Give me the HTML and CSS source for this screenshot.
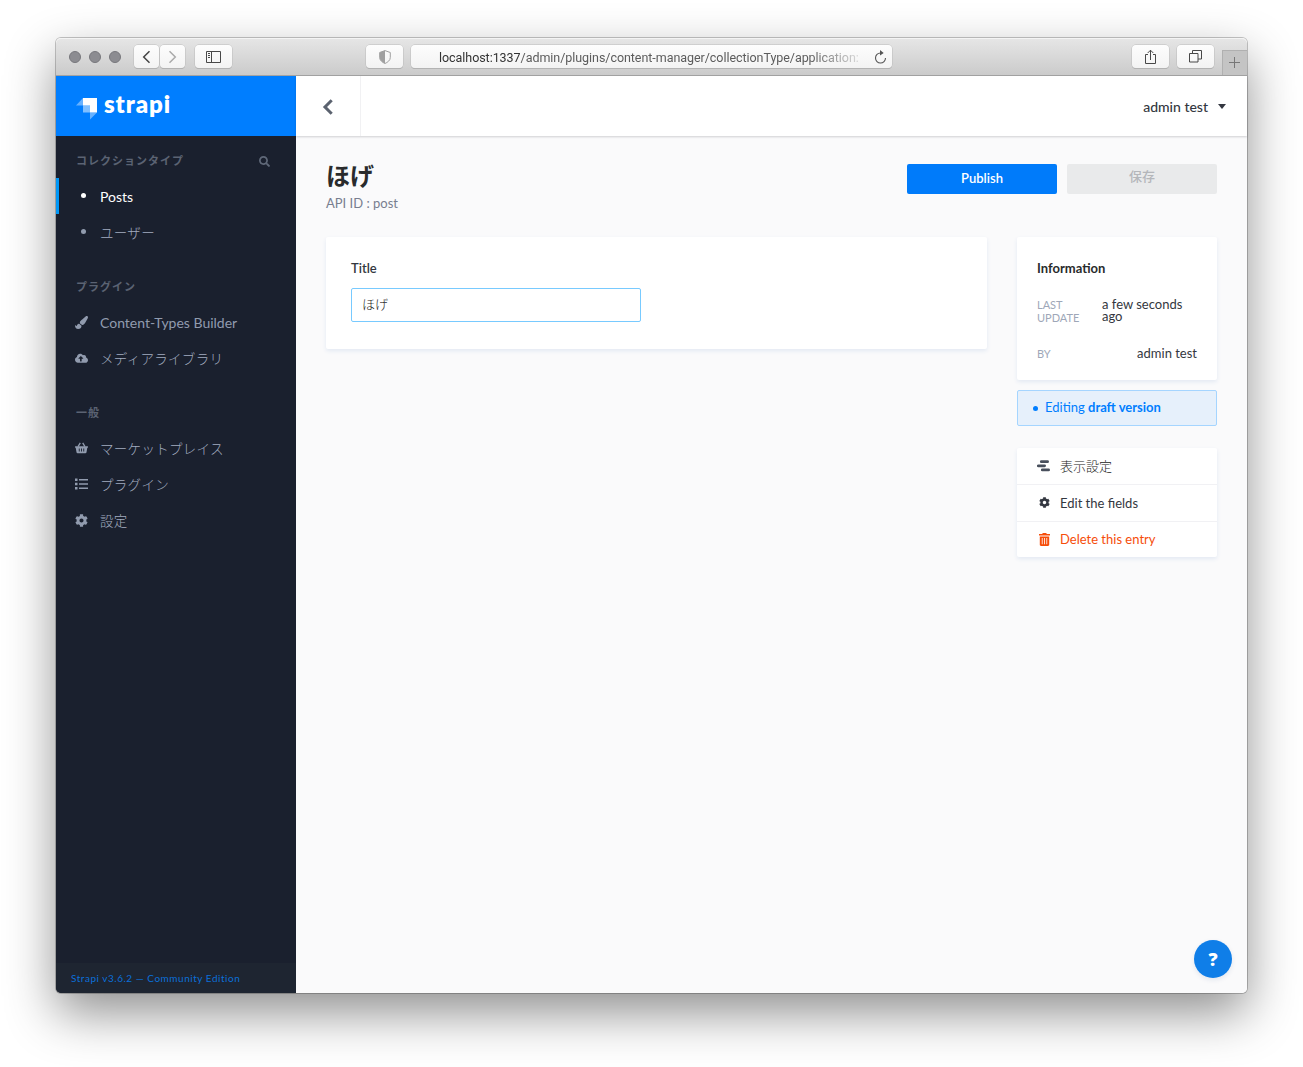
FILE: index.html
```html
<!DOCTYPE html>
<html lang="ja">
<head>
    <meta charset="UTF-8">
    <title>Strapi</title>
    <link rel="stylesheet" href="styles.css">
</head>
<body>
    <div class="window">
        <!-- Browser toolbar -->
        <div class="toolbar">
            <div class="lights"><i></i><i></i><i></i></div>
            <div class="nav-buttons">
                <span class="tool back"><svg width="9" height="14" viewBox="0 0 9 14"><path d="M7.5 1.2 1.7 7l5.8 5.8" fill="none" stroke="#444" stroke-width="1.5"/></svg></span>
                <span class="tool next"><svg width="9" height="14" viewBox="0 0 9 14"><path d="M1.5 1.2 7.3 7l-5.8 5.8" fill="none" stroke="#aaa" stroke-width="1.5"/></svg></span>
            </div>
            <span class="tool wide"><svg width="15" height="12" viewBox="0 0 15 12"><path d="M.5.5h14v11H.5zM5.5.5v11M2 2.5h2M2 4.5h2M2 6.5h2" fill="none" stroke="#484848"/></svg></span>
            <span class="tool wide shield"><svg width="12" height="14" viewBox="0 0 12 14"><path d="M6 .6 11.3 2.5v5.100c0 2.800-2.800 4.800-5.300 5.900C3.500 12.400.7 10.400.7 7.600V2.500z" fill="none" stroke="#a0a0a0"/><path d="M6 .6v12.900C3.500 12.400.7 10.400.7 7.600V2.500z" fill="#a0a0a0"/></svg></span>
            <div class="address">
                <span class="url"><b>localhost:1337</b>/admin/plugins/content-manager/collectionType/application:</span>
                <svg class="reload" width="13" height="14" viewBox="0 0 13 14"><path d="M8.300 3H6.500a5 5 0 1 0 5 5" fill="none" stroke="#555" stroke-width="1.100"/><path d="M6 0 9.700 3 6 5.600z" fill="#555"/></svg>
            </div>
            <span class="tool wide share"><svg width="13" height="16" viewBox="0 0 13 16"><path d="M4 5.500H1.500v9h10v-9H9M6.500 11V1.200M3.700 4l2.800-2.800L9.300 4" fill="none" stroke="#484848"/></svg></span>
            <span class="tool wide tabs"><svg width="13" height="13" viewBox="0 0 13 13"><path d="M.5 3.500h8.500v8.500H.5zM3.500 3.500V.5h9v8.500H9" fill="none" stroke="#484848"/></svg></span>
            <span class="new-tab"><svg width="11" height="11" viewBox="0 0 11 11"><path d="M5.500 0v11M0 5.500h11" stroke="#777"/></svg></span>
        </div>

        <div class="app">
            <div class="sidebar">
                <div class="brand">
                    <svg width="22" height="22" viewBox="0 0 22 22"><path d="M7 0h14v14.500h-7V7.500H7z" fill="#fff"/><path d="M7 0v7.500H0z" fill="#fff" opacity=".4"/><path d="M7 7.500h7v7H7z" fill="#fff" opacity=".5"/><path d="M14 14.500h7l-7 7z" fill="#fff" opacity=".4"/></svg>
                    <span class="wordmark">strapi</span>
                </div>

                <div class="menu">
                    <div class="section">
                        <div class="heading">コレクションタイプ
                            <svg class="search" width="11" height="11" viewBox="0 0 512 512"><path d="M505 442.700L405.300 343c-4.500-4.500-10.600-7-17-7H372c27.600-35.300 44-79.700 44-128C416 93.100 322.900 0 208 0S0 93.100 0 208s93.100 208 208 208c48.300 0 92.700-16.400 128-44v16.300c0 6.400 2.500 12.500 7 17l99.700 99.700c9.400 9.400 24.600 9.400 33.900 0l28.300-28.300c9.400-9.400 9.400-24.600.1-34zM208 336c-70.700 0-128-57.200-128-128 0-70.700 57.200-128 128-128 70.700 0 128 57.200 128 128 0 70.700-57.200 128-128 128z"/></svg>
                        </div>
                        <div class="link active"><span class="icon"><i class="dot"></i></span><span>Posts</span></div>
                        <div class="link"><span class="icon"><i class="dot"></i></span><span class="ja">ユーザー</span></div>
                    </div>
                    <div class="section">
                        <div class="heading">プラグイン</div>
                        <div class="link"><span class="icon"><svg width="13" height="13" viewBox="0 0 512 512"><path d="M167.020 309.340c-40.120 2.580-76.530 17.860-97.190 72.300-2.350 6.210-8 9.980-14.590 9.980-11.110 0-45.460-27.670-55.250-34.350C0 439.620 37.930 512 128 512c75.860 0 128-43.770 128-120.190 0-3.110-.65-6.080-.97-9.130l-88.010-73.340zM457.890 0c-15.160 0-29.370 6.710-40.210 16.450C213.270 199.050 192 203.340 192 257.090c0 13.700 3.250 26.760 8.730 38.700l63.820 53.180c7.210 1.800 14.640 3.030 22.390 3.030 62.110 0 98.110-45.470 211.160-256.460 7.380-14.350 13.900-29.850 13.900-45.990C512 20.640 486 0 457.890 0z"/></svg></span><span>Content-Types Builder</span></div>
                        <div class="link"><span class="icon"><svg width="13" height="10.400" viewBox="0 0 640 512"><path d="M537.600 226.600c4.100-10.700 6.400-22.400 6.400-34.600 0-53-43-96-96-96-19.700 0-38.100 6-53.300 16.200C367 64.200 315.300 32 256 32c-88.400 0-160 71.600-160 160 0 2.700.1 5.400.2 8.100C40.200 219.800 0 273.200 0 336c0 79.500 64.500 144 144 144h368c70.700 0 128-57.300 128-128 0-61.900-44-113.600-102.400-125.400zM393.400 288H328v112c0 8.800-7.200 16-16 16h-48c-8.800 0-16-7.200-16-16V288h-65.400c-14.300 0-21.400-17.200-11.300-27.300l105.400-105.400c6.200-6.200 16.400-6.200 22.600 0l105.400 105.400c10.100 10.100 2.900 27.300-11.300 27.300z"/></svg></span><span class="ja">メディアライブラリ</span></div>
                    </div>
                    <div class="section">
                        <div class="heading">一般</div>
                        <div class="link"><span class="icon"><svg width="13" height="12" viewBox="0 0 13 12"><path fill-rule="evenodd" d="M.1 4.200h12.800v1.500h-.6l-.8 4.600c-.1.600-.5.900-1.100.9H2.600c-.6 0-1-.3-1.100-.9L.7 5.700H.1zM3.800 6.500v3h.9v-3zM6.050 6.500v3h.9v-3zM8.300 6.500v3h.9v-3z"/><path d="M3 4.600 5.300.9M10 4.600 7.700.9" stroke="#919bae" stroke-width="1.300"/></svg></span><span class="ja">マーケットプレイス</span></div>
                        <div class="link"><span class="icon"><svg width="13" height="12" viewBox="0 0 13 12"><path d="M0 .5h2.500V3H0zM0 4.700h2.500v2.500H0zM0 9h2.500v2.500H0zM4 1h9v1.500H4zM4 5.200h9v1.500H4zM4 9.500h9V11H4z"/></svg></span><span class="ja">プラグイン</span></div>
                        <div class="link"><span class="icon"><svg width="13" height="13" viewBox="0 0 512 512"><path id="cog" d="M487.400 315.700l-42.600-24.600c4.300-23.200 4.300-47 0-70.200l42.600-24.600c4.900-2.800 7.100-8.600 5.500-14-11.100-35.600-30-67.800-54.700-94.600-3.800-4.100-10-5.100-14.800-2.300L380.800 110c-17.900-15.400-38.500-27.300-60.800-35.100V25.800c0-5.600-3.900-10.500-9.400-11.700-36.700-8.200-74.300-7.800-109.200 0-5.500 1.200-9.400 6.100-9.400 11.700V75c-22.200 7.900-42.800 19.800-60.800 35.100L88.700 85.500c-4.900-2.800-11-1.900-14.800 2.300-24.700 26.700-43.600 58.900-54.700 94.600-1.700 5.400.6 11.200 5.500 14L67.300 221c-4.300 23.200-4.300 47 0 70.200l-42.600 24.600c-4.900 2.800-7.100 8.600-5.500 14 11.100 35.600 30 67.800 54.700 94.600 3.800 4.100 10 5.100 14.800 2.300l42.600-24.600c17.900 15.400 38.500 27.300 60.800 35.100v49.200c0 5.600 3.900 10.500 9.400 11.700 36.700 8.200 74.300 7.800 109.200 0 5.500-1.200 9.400-6.100 9.400-11.700v-49.200c22.200-7.900 42.800-19.800 60.800-35.100l42.600 24.600c4.900 2.800 11 1.900 14.800-2.300 24.700-26.700 43.600-58.900 54.700-94.600 1.500-5.500-.7-11.300-5.600-14.100zM256 336c-44.100 0-80-35.900-80-80s35.900-80 80-80 80 35.900 80 80-35.900 80-80 80z"/></svg></span><span class="ja">設定</span></div>
                    </div>
                </div>

                <div class="version">Strapi v3.6.2 — Community Edition</div>
            </div>

            <div class="main">
                <div class="header">
                    <div class="go-back"><svg width="12" height="16" viewBox="0 0 12 16"><path d="M9.700 1.300 3 8l6.700 6.700" fill="none" stroke="#5b626f" stroke-width="3"/></svg></div>
                    <div class="user">admin test<i class="caret"></i></div>
                </div>

                <div class="content">
                    <div class="title-row">
                        <div>
                            <h1>ほげ</h1>
                            <p class="api-id">API ID : post</p>
                        </div>
                        <div class="actions">
                            <button class="publish">Publish</button>
                            <button class="save" disabled>保存</button>
                        </div>
                    </div>

                    <div class="columns">
                        <div class="card form">
                            <label for="title">Title</label>
                            <input type="text" id="title" value="ほげ">
                        </div>

                        <div class="aside">
                            <div class="card info">
                                <h2>Information</h2>
                                <div class="row updated"><span class="key">LAST UPDATE</span><span class="value">a few seconds ago</span></div>
                                <div class="row"><span class="key">BY</span><span class="value">admin test</span></div>
                            </div>
                            <div class="draft"><i></i><span>Editing <b>draft version</b></span></div>
                            <div class="card links">
                                <div class="item display"><span class="item-icon"><svg width="13" height="12" viewBox="0 0 13 12"><path d="M4.300 1.700h6.300M1.300 5.800h6.300M5.300 9.900h6.300" stroke="#484f5c" stroke-width="2.800" stroke-linecap="round"/></svg></span>表示設定</div>
                                <div class="item"><span class="item-icon gear"><svg width="11" height="11" viewBox="0 0 512 512"><use href="#cog" fill="#333740"/></svg></span>Edit the fields</div>
                                <div class="item delete"><span class="item-icon trash"><svg width="11" height="13" viewBox="0 0 11 13"><path fill="#f64d0a" fill-rule="evenodd" d="M0 1h3.200L3.800 0h3.400l.6 1H11v1.600H0zM.8 3.400h9.400v8.400c0 .7-.5 1.200-1.200 1.200H2c-.7 0-1.200-.5-1.200-1.200zM2.800 5v6.300h.8V5zM5.100 5v6.300h.8V5zM7.400 5v6.300h.8V5z"/></svg></span>Delete this entry</div>
                            </div>
                        </div>
                    </div>
                </div>

                <div class="help">?</div>
            </div>
        </div>
    </div>
</body>
</html>
```

FILE: styles.css
```css
* {
    box-sizing: border-box;
}

body {
    margin: 0;
    min-height: 1067px;
    padding: 38px 56px 0;
    background: #fff;
    font-family: Lato, "Noto Sans CJK JP", sans-serif;
    font-size: 13px;
    color: #333740;
}

.window {
    width: 1191px;
    height: 955px;
    display: flex;
    flex-direction: column;
    border-radius: 5px;
    box-shadow: 0 0 0 1px rgba(0,0,0,0.22), 0 20px 50px rgba(0,0,0,0.44);
}

.toolbar {
    height: 38px;
    flex: none;
    display: flex;
    align-items: center;
    background: linear-gradient(#e6e6e6, #cbcbcb);
    border-bottom: 1px solid #a3a3a3;
    border-radius: 5px 5px 0 0;
    box-shadow: inset 0 1px #f4f4f4;
}

.lights {
    display: flex;
    gap: 8px;
    margin: 0 13px 0 13px;
}

.lights i {
    width: 12px;
    height: 12px;
    border-radius: 50%;
    background: #8c8c91;
    border: 1px solid #77777c;
}

.nav-buttons {
    display: flex;
    gap: 1px;
    margin-right: 9px;
}

.tool {
    height: 23px;
    width: 26px;
    display: flex;
    align-items: center;
    justify-content: center;
    background: linear-gradient(#fdfdfd, #f3f3f3);
    border-radius: 4px;
    box-shadow: 0 0 0 0.5px #bbb, 0 1px 0.5px #aaa;
}

.wide {
    width: 37px;
}

.back, .next {
    width: 25px;
}

.nav-buttons + .wide {
    margin-left: 1px;
}

.shield {
    margin-left: 134px;
}

.address {
    width: 481px;
    height: 23px;
    margin-left: 8px;
    padding: 0 5px 0 28px;
    display: flex;
    align-items: center;
    justify-content: space-between;
    background: linear-gradient(#fdfdfd, #f3f3f3);
    border-radius: 4px;
    box-shadow: 0 0 0 0.5px #bbb, 0 1px 0.5px #aaa;
}

.url {
    padding-top: 2px;
    white-space: nowrap;
    font: 12.5px/20px Roboto, sans-serif;
    letter-spacing: -0.05px;
    color: #5c5c5c;
    -webkit-mask-image: linear-gradient(90deg, #000 370px, rgba(0,0,0,0.15) 422px);
    mask-image: linear-gradient(90deg, #000 370px, rgba(0,0,0,0.15) 422px);
}

.url b {
    font-weight: 400;
    color: #333;
}

.share {
    margin-left: auto;
}

.tabs {
    margin: 0 8px;
}

.new-tab {
    width: 25px;
    height: 25px;
    padding: 0 1px 1px 0;
    align-self: flex-end;
    display: flex;
    align-items: center;
    justify-content: center;
    border: 1px solid #b0b0b0;
    border-width: 1px 0 0 1px;
    background: #c4c4c4;
}

.app {
    flex: 1;
    display: flex;
}

.sidebar {
    width: 240px;
    flex: none;
    display: flex;
    flex-direction: column;
    background: #1a202e;
    border-radius: 0 0 0 5px;
    overflow: hidden;
}

.brand {
    height: 60px;
    display: flex;
    align-items: center;
    gap: 6px;
    padding: 5px 0 0 20px;
    background: #007eff;
}

.wordmark {
    color: #fff;
    font-size: 24px;
    font-weight: 800;
    line-height: 24px;
    letter-spacing: 0.9px;
    margin-top: -9px;
}

.menu {
    flex: 1;
    display: flex;
    flex-direction: column;
    gap: 18px;
    padding-top: 6px;
}

.heading {
    height: 36px;
    display: flex;
    align-items: center;
    justify-content: space-between;
    padding: 0 26px 0 20px;
    font-size: 11px;
    font-weight: 700;
    letter-spacing: 1px;
    color: #5b6373;
}

.search {
    margin-top: 2px;
    fill: #5f6878;
}

.link {
    height: 36px;
    display: flex;
    align-items: center;
    padding-left: 16px;
    border-left: 3px solid transparent;
    font-size: 14px;
    color: #919bae;
    fill: #919bae;
}

.link.active {
    color: #fff;
    border-left-color: #0097f7;
}

.ja {
    padding-bottom: 1px;
    font-size: 13.5px;
    font-weight: 300;
    letter-spacing: 0.3px;
    color: #a3adc0;
}

.icon {
    width: 25px;
    display: flex;
}

.dot {
    width: 5px;
    height: 5px;
    margin: -1px 0 0 6px;
    border-radius: 50%;
    background: currentColor;
}

.version {
    height: 30px;
    padding-left: 15px;
    font-size: 10px;
    line-height: 31px;
    letter-spacing: 0.52px;
    color: #0b6fd9;
    background: #1e2531;
}

.main {
    flex: 1;
    position: relative;
    background: #fafafb;
    border-radius: 0 0 5px 0;
}

.header {
    height: 60px;
    display: flex;
    align-items: center;
    justify-content: space-between;
    background: #fff;
    box-shadow: 0 1px 2px rgba(40,42,49,0.2);
}

.go-back {
    width: 65px;
    height: 60px;
    display: flex;
    align-items: center;
    justify-content: center;
    padding-top: 2px;
    border-right: 1px solid #f1f1f3;
}

.user {
    display: flex;
    align-items: center;
    gap: 10px;
    padding: 1px 21px 0 0;
    font-weight: 500;
    font-size: 14px;
}

.caret {
    border: 4.5px solid transparent;
    border-top: 5px solid #333740;
    border-bottom: 0;
}

.content {
    padding: 28px 30px 0;
}

.title-row {
    height: 73px;
    display: flex;
    justify-content: space-between;
}

h1 {
    margin: 0;
    font-size: 24px;
    line-height: 24px;
    font-weight: 700;
    color: #292b2c;
}

.api-id {
    margin: 6px 0 0;
    line-height: 18px;
    color: #787e8f;
}

.actions {
    display: flex;
    gap: 10px;
}

button {
    width: 150px;
    height: 30px;
    padding: 0 0 2px;
    border: none;
    border-radius: 2px;
    font-family: inherit;
    font-size: 13px;
    font-weight: 600;
}

.publish {
    background: #007bfa;
    color: #fff;
}

.save {
    background: #e9eaeb;
    color: #b4b6ba;
    font-weight: 500;
    padding-bottom: 7px;
}

.columns {
    display: flex;
    align-items: flex-start;
    gap: 30px;
}

.card {
    background: #fff;
    border-radius: 2px;
    box-shadow: 0 2px 4px #e3e9f3;
}

.form {
    flex: 1;
    height: 112px;
    padding: 22px 25px;
}

label {
    display: block;
    line-height: 18px;
    font-weight: 600;
}

input {
    display: block;
    width: 290px;
    height: 34px;
    margin-top: 11px;
    padding: 0 10px 3px;
    border: 1px solid #78caff;
    border-radius: 2px;
    font-family: inherit;
    font-size: 13px;
    font-weight: 300;
    color: #222;
}

.aside {
    width: 200px;
}

.info {
    height: 143px;
    padding: 22px 20px;
}

h2 {
    margin: 0 0 21px;
    font-size: 13px;
    line-height: 18px;
    font-weight: 700;
    color: #292b2c;
}

.row {
    display: flex;
    justify-content: space-between;
    line-height: 12px;
}

.updated {
    height: 24px;
    margin-bottom: 25px;
}

.key {
    width: 65px;
    font-size: 11px;
    line-height: 13px;
    color: #9ea7b8;
}

.updated .value {
    width: 95px;
}

.value {
    color: #333740;
}

.draft {
    height: 36px;
    margin: 10px 0 22px;
    padding: 0 0 2px 15px;
    display: flex;
    align-items: center;
    gap: 7px;
    border: 1px solid #a5d5ff;
    border-radius: 2px;
    background: #e6f0fb;
    color: #007eff;
}

.draft i {
    width: 5px;
    height: 5px;
    margin-top: 3px;
    border-radius: 50%;
    background: #007eff;
}

.item {
    height: 36px;
    display: flex;
    align-items: center;
    padding-left: 21px;
}

.display {
    padding: 0 0 1px 20px;
    font-weight: 300;
    color: #222;
}

.display .item-icon {
    width: 23px;
    padding-top: 1px;
}

.item + .item {
    border-top: 1px solid #f1f1f4;
    height: 36.5px;
}

.item-icon {
    width: 22px;
    display: flex;
}

.gear, .trash {
    padding-left: 1px;
}

.delete {
    color: #f64d0a;
}

/* floating help button */
.help {
    position: absolute;
    right: 15px;
    bottom: 15px;
    width: 38px;
    height: 38px;
    border-radius: 50%;
    background: #0f7ee8;
    box-shadow: 0 2px 5px rgba(15,60,130,0.1);
    color: #fff;
    font: 800 18px/38px "Open Sans", sans-serif;
    text-align: center;
}
```
